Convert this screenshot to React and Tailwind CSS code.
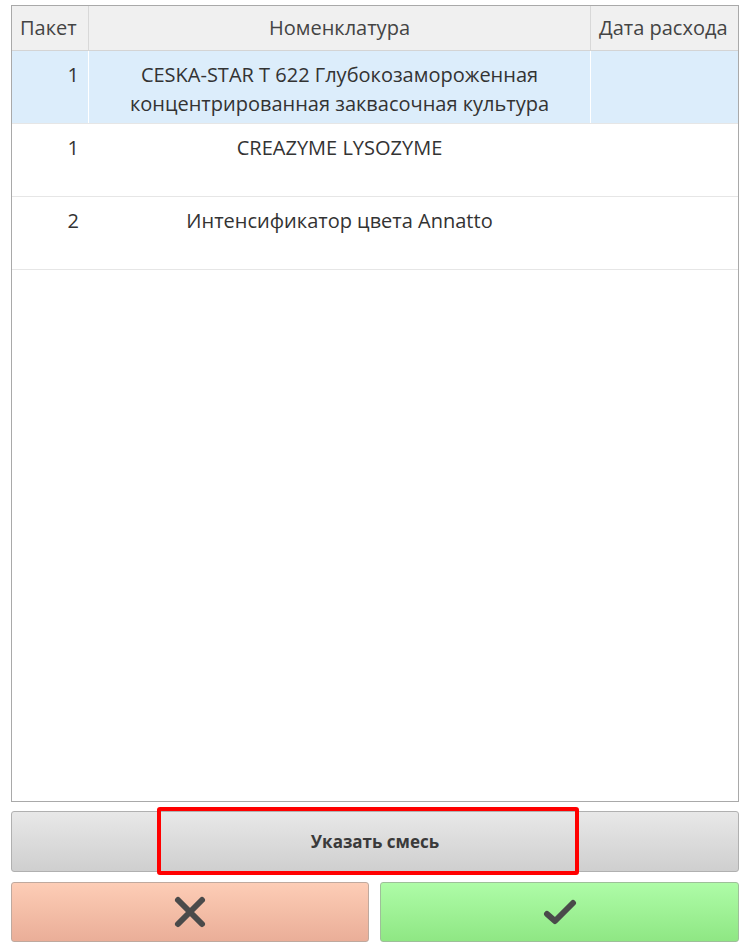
const rows = [
  { qty: 1, name: ['CESKA-STAR T 622 Глубокозамороженная', 'концентрированная заквасочная культура'], selected: true },
  { qty: 1, name: ['CREAZYME LYSOZYME'] },
  { qty: 2, name: ['Интенсификатор цвета Annatto'] },
];

function CrossIcon() {
  return (
    <svg width="34" height="34" viewBox="0 0 34 34" fill="none">
      <path d="M5 5 L29 29 M29 5 L5 29" stroke="#4a4a4a" strokeWidth="6" strokeLinecap="round" />
    </svg>
  );
}

function CheckIcon() {
  return (
    <svg width="34" height="28" viewBox="0 0 34 28" fill="none">
      <path d="M4 16 L12 23 L30 5" stroke="#4a4a4a" strokeWidth="6" strokeLinecap="round" strokeLinejoin="round" />
    </svg>
  );
}

export default function App() {
  return (
    <div className="w-[749px] h-[950px] bg-white pl-[11px] pr-[10px] pt-[5px] font-['Open_Sans',sans-serif] text-[#333]">
      <div className="h-[797px] border border-[#a9a9a9] flex flex-col">
        <div className="flex h-[45px] bg-[#f0f0f0] border-b border-[#d4d4d4] text-[20px] text-[#444]">
          <div className="w-[77px] border-r border-[#d8d8d8] flex items-center pl-[8px]">Пакет</div>
          <div className="w-[502px] border-r border-[#d8d8d8] flex items-center justify-center">Номенклатура</div>
          <div className="flex-1 flex items-center pl-[8px]">Дата расхода</div>
        </div>
        {rows.map((r, i) => (
          <div
            key={i}
            className={`flex h-[73px] border-b border-[#e6e6e6] text-[20px] leading-[29px] ${r.selected ? 'bg-[#dcedfb]' : 'bg-white'}`}
          >
            <div className={`w-[77px] border-r ${r.selected ? 'border-white' : 'border-transparent'} text-right pr-[9px] pt-[9px]`}>
              {r.qty}
            </div>
            <div className={`w-[502px] border-r ${r.selected ? 'border-white' : 'border-transparent'} text-center pt-[9px] whitespace-nowrap`}>
              {r.name.map((l) => (
                <div key={l}>{l}</div>
              ))}
            </div>
            <div className="flex-1" />
          </div>
        ))}
      </div>

      <div className="relative mt-[9px]">
        <button className="w-full h-[61px] rounded-[3px] border border-[#b0b0b0] bg-gradient-to-b from-[#e8e8e8] to-[#cfcfcf] text-[17px] font-bold text-[#3a3a3a] flex items-center justify-center">
          Указать смесь
        </button>
        <div className="absolute left-[146px] top-[-4px] w-[422px] h-[68px] border-[4px] border-[#ff0000] rounded-[3px]" />
      </div>

      <div className="flex gap-[11px] mt-[10px]">
        <button className="w-[358px] h-[60px] rounded-[3px] border border-[#bfa99e] bg-gradient-to-b from-[#fdcdb6] to-[#eaae98] flex items-center justify-center">
          <CrossIcon />
        </button>
        <button className="flex-1 h-[60px] rounded-[3px] border border-[#9ebf99] bg-gradient-to-b from-[#aefca7] to-[#8fe784] flex items-center justify-center">
          <CheckIcon />
        </button>
      </div>
    </div>
  );
}
